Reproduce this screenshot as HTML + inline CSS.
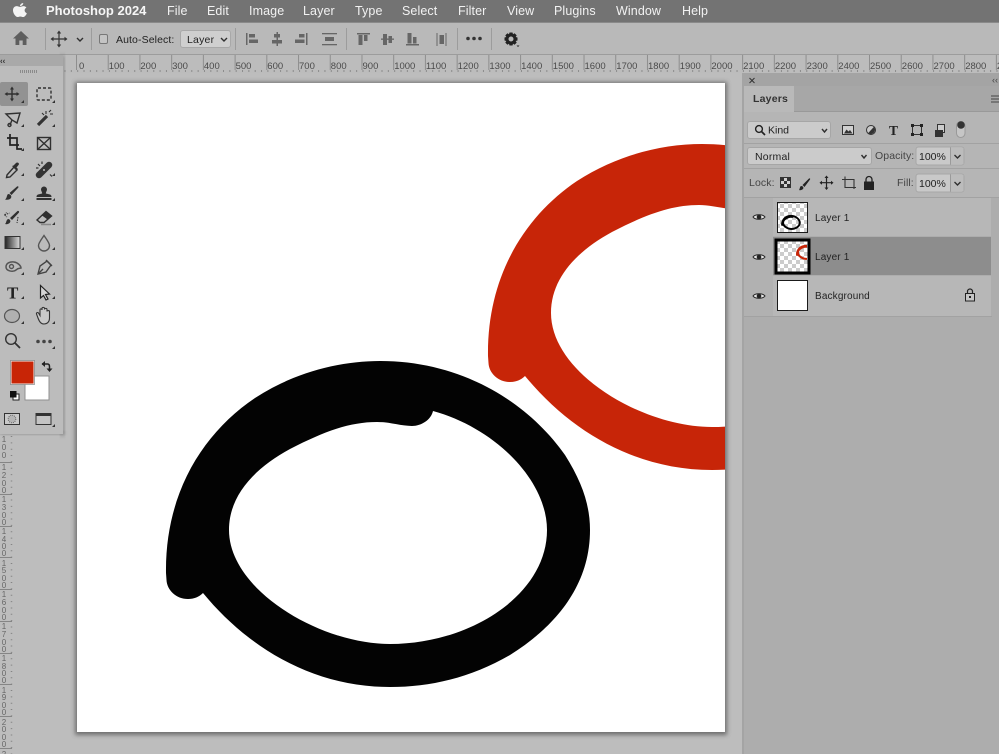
<!DOCTYPE html>
<html lang="en"><head><meta charset="utf-8"><title>Photoshop 2024</title>
<style>
html,body{margin:0;padding:0;width:999px;height:754px;overflow:hidden;background:#bdbdbd}
svg{display:block;position:absolute;left:0;top:0;filter:blur(.35px)}
text{font-family:"Liberation Sans",sans-serif}
.m{font-size:12.5px;fill:#f2f2f2;letter-spacing:.1px}
.r{font-size:9.5px;fill:#4a4a4a}
.v{font-size:8px;fill:#666;text-anchor:middle}
.p{font-size:10px;fill:#222;letter-spacing:.15px}
.s{stroke:#303030;fill:none;stroke-width:1.4}
.f{fill:#303030}
</style></head><body>
<svg width="999" height="754" viewBox="0 0 999 754" xmlns="http://www.w3.org/2000/svg">
<defs>
<path id="ring" fill-rule="evenodd" d="M166 573C165 493 203 433 255 398C295 372 340 361 380 361C465 361 530 405 565 455C582 482 590 505 590 530C590 590 550 630 510 655C470 678 430 687 390 687C315 687 250 650 203 593C199 597 194 599 188 599C176 599 167 590 166.500 580ZM229 530C229 495 255 468 290 449C325 431 350 422 377 422C390 422 401 426 412 426C421 426 431 420 433 411C495 428 547 480 547 530C547 595 470 644 390 644C320 644 229 590 229 530Z"/>
<clipPath id="cv"><rect x="77" y="83" width="648" height="649"/></clipPath>
<clipPath id="t1"><rect x="778" y="203" width="29" height="29"/></clipPath>
<clipPath id="t2"><rect x="778" y="242" width="29" height="29"/></clipPath>
<pattern id="chk" width="8" height="8" patternUnits="userSpaceOnUse"><rect width="8" height="8" fill="#fff"/><rect width="4" height="4" fill="#ccc"/><rect x="4" y="4" width="4" height="4" fill="#ccc"/></pattern>
<linearGradient id="gr" x1="0" x2="1" y1="0" y2="0"><stop offset="0" stop-color="#222"/><stop offset="1" stop-color="#ddd"/></linearGradient>
<filter id="sh" x="-5%" y="-5%" width="110%" height="110%"><feGaussianBlur stdDeviation="2"/></filter>
</defs>

<!-- workspace -->
<rect width="999" height="754" fill="#bdbdbd"/>

<!-- menu bar -->
<rect width="999" height="22" fill="#737373"/>
<rect y="22" width="999" height="1" fill="#8a8a8a"/>
<path fill="#f4f4f4" transform="translate(13 3) scale(1.4 1.16) translate(-13 -3.700)" d="M20.600 6.400C19.500 6.400 18.800 7 18 7S16.600 6.400 15.600 6.400C14 6.500 13 8 13 10C13 12.700 14.800 15.800 16.300 15.800C17 15.800 17.400 15.300 18.200 15.300S19.400 15.800 20.200 15.800C21.400 15.700 22.400 14 22.900 12.600C21.700 12 21.300 11 21.300 10C21.300 9 21.800 8.200 22.600 7.700C22 6.800 21.300 6.400 20.600 6.400ZM18 6.300C18 5 19 3.900 20.300 3.700C20.400 5.100 19.300 6.300 18 6.300Z"/>
<text x="46" y="15" font-size="13" font-weight="700" fill="#f6f6f6">Photoshop 2024</text>
<text class="m" x="167" y="15">File</text>
<text class="m" x="207" y="15">Edit</text>
<text class="m" x="249" y="15">Image</text>
<text class="m" x="303" y="15">Layer</text>
<text class="m" x="355" y="15">Type</text>
<text class="m" x="402" y="15">Select</text>
<text class="m" x="458" y="15">Filter</text>
<text class="m" x="507" y="15">View</text>
<text class="m" x="554" y="15">Plugins</text>
<text class="m" x="616" y="15">Window</text>
<text class="m" x="682" y="15">Help</text>

<!-- options bar -->
<rect y="23" width="999" height="32" fill="#b9b9b9"/>
<rect y="54" width="999" height="1" fill="#9c9c9c"/>
<path fill="#5e5e5e" d="M21 31L13 38.500H15.500V45H19.300V40.500H22.700V45H26.500V38.500H29Z"/>
<g fill="#9c9c9c"><rect x="45" y="28" width="1" height="22"/><rect x="91" y="28" width="1" height="22"/><rect x="235" y="28" width="1" height="22"/><rect x="346" y="28" width="1" height="22"/><rect x="457" y="28" width="1" height="22"/><rect x="491" y="28" width="1" height="22"/></g>
<path d="M59 32V46M52 39H66" fill="none" stroke="#333" stroke-width="1.200"/>
<path fill="#333" d="M59 30.500L56.800 33.500H61.200ZM59 47.500L56.800 44.500H61.200ZM50.500 39L53.500 36.800V41.200ZM67.500 39L64.500 36.800V41.200Z"/>
<path d="M77 38L80 41L83 38" class="s" stroke-width="1.100"/>
<rect x="99.500" y="34.500" width="8" height="9" rx="1.500" fill="#c4c4c4" stroke="#777"/>
<text x="116" y="43" font-size="10.500" fill="#222" letter-spacing=".1">Auto-Select:</text>
<rect x="180.500" y="30.500" width="50" height="17" rx="2.500" fill="#cfcfcf" stroke="#a8a8a8"/>
<text x="187" y="43" font-size="10.500" fill="#222" letter-spacing=".2">Layer</text>
<path d="M221 38L224 41L227 38" class="s" stroke-width="1.100"/>
<g fill="#666">
<rect x="246" y="33" width="1.500" height="12"/><rect x="249" y="34" width="6" height="3.500"/><rect x="249" y="39.500" width="9" height="3.500"/>
<rect x="276.500" y="32" width="1.500" height="14"/><rect x="274" y="34" width="6" height="3.500"/><rect x="272" y="40" width="10" height="3.500"/>
<rect x="306" y="33" width="1.500" height="12"/><rect x="299" y="34" width="5.500" height="3.500"/><rect x="295" y="39.500" width="9.500" height="3.500"/>
<rect x="322" y="33" width="15" height="1.300"/><rect x="325" y="37" width="9" height="4"/><rect x="322" y="44" width="15" height="1.300"/>
<rect x="357" y="33" width="13" height="1.500"/><rect x="358.500" y="35" width="4" height="10"/><rect x="364" y="35" width="3.500" height="6"/>
<rect x="381" y="38.500" width="13" height="1.300"/><rect x="383" y="34" width="4" height="11"/><rect x="388.500" y="36" width="3.500" height="7"/>
<rect x="406" y="44" width="13" height="1.500"/><rect x="407.500" y="33" width="4" height="10.500"/><rect x="413" y="37" width="3.500" height="6.500"/>
<rect x="436.500" y="33" width="1" height="13"/><rect x="445.500" y="33" width="1" height="13"/><rect x="439.500" y="35" width="4.500" height="9"/>
</g>
<g fill="#333"><circle cx="468" cy="38.500" r="1.800"/><circle cx="474" cy="38.500" r="1.800"/><circle cx="480" cy="38.500" r="1.800"/></g>
<path fill="#222" fill-rule="evenodd" d="M509.500 32.500H512.500L513 34.300L514.600 33.300L516.700 35.400L515.700 37L517.500 37.500V40.500L515.700 41L516.700 42.600L514.600 44.700L513 43.700L512.500 45.500H509.500L509 43.700L507.400 44.700L505.300 42.600L506.300 41L504.500 40.500V37.500L506.300 37L505.300 35.400L507.400 33.300L509 34.300ZM511 36.500A2.500 2.500 0 1 0 511 41.500A2.500 2.500 0 1 0 511 36.500Z"/>
<path fill="#222" d="M516.500 45.500H519.500L518 47Z"/>

<!-- horizontal ruler -->
<rect x="64" y="55" width="935" height="18" fill="#bcbcbc"/>
<line x1="76" y1="62.500" x2="999" y2="62.500" stroke="#8e8e8e" stroke-width="15" stroke-dasharray="1 30.720"/>
<line x1="64.500" y1="71" x2="999" y2="71" stroke="#7c7c7c" stroke-width="1.500" stroke-dasharray="1 5.340"/>
<g class="r">
<text x="79" y="69">0</text><text x="108.700" y="69">100</text><text x="140.400" y="69">200</text><text x="172.100" y="69">300</text><text x="203.900" y="69">400</text><text x="235.600" y="69">500</text><text x="267.300" y="69">600</text><text x="299" y="69">700</text><text x="330.800" y="69">800</text><text x="362.500" y="69">900</text><text x="394.200" y="69">1000</text><text x="425.900" y="69">1100</text><text x="457.600" y="69">1200</text><text x="489.400" y="69">1300</text><text x="521.100" y="69">1400</text><text x="552.800" y="69">1500</text><text x="584.500" y="69">1600</text><text x="616.300" y="69">1700</text><text x="648" y="69">1800</text><text x="679.700" y="69">1900</text><text x="711.400" y="69">2000</text><text x="743.100" y="69">2100</text><text x="774.900" y="69">2200</text><text x="806.600" y="69">2300</text><text x="838.300" y="69">2400</text><text x="870" y="69">2500</text><text x="901.800" y="69">2600</text><text x="933.500" y="69">2700</text><text x="965.200" y="69">2800</text><text x="996.900" y="69">2900</text>
</g>

<!-- vertical ruler -->
<g fill="#858585"><rect y="462" width="12" height="1"/><rect y="494" width="12" height="1"/><rect y="526" width="12" height="1"/><rect y="557" width="12" height="1"/><rect y="589" width="12" height="1"/><rect y="621" width="12" height="1"/><rect y="653" width="12" height="1"/><rect y="684" width="12" height="1"/><rect y="716" width="12" height="1"/><rect y="748" width="12" height="1"/></g>
<line x1="11.500" y1="436" x2="11.500" y2="754" stroke="#858585" stroke-width="1.500" stroke-dasharray="1 5.350"/>
<g class="v">
<text x="4"><tspan x="4" y="442">1</tspan><tspan x="4" y="450">0</tspan><tspan x="4" y="458">0</tspan></text>
<text><tspan x="4" y="470">1</tspan><tspan x="4" y="478">2</tspan><tspan x="4" y="486">0</tspan><tspan x="4" y="493">0</tspan></text>
<text><tspan x="4" y="502">1</tspan><tspan x="4" y="510">3</tspan><tspan x="4" y="518">0</tspan><tspan x="4" y="525">0</tspan></text>
<text><tspan x="4" y="534">1</tspan><tspan x="4" y="542">4</tspan><tspan x="4" y="549">0</tspan><tspan x="4" y="556">0</tspan></text>
<text><tspan x="4" y="566">1</tspan><tspan x="4" y="573">5</tspan><tspan x="4" y="581">0</tspan><tspan x="4" y="588">0</tspan></text>
<text><tspan x="4" y="597">1</tspan><tspan x="4" y="605">6</tspan><tspan x="4" y="613">0</tspan><tspan x="4" y="620">0</tspan></text>
<text><tspan x="4" y="629">1</tspan><tspan x="4" y="637">7</tspan><tspan x="4" y="645">0</tspan><tspan x="4" y="652">0</tspan></text>
<text><tspan x="4" y="661">1</tspan><tspan x="4" y="669">8</tspan><tspan x="4" y="676">0</tspan><tspan x="4" y="683">0</tspan></text>
<text><tspan x="4" y="693">1</tspan><tspan x="4" y="700">9</tspan><tspan x="4" y="708">0</tspan><tspan x="4" y="715">0</tspan></text>
<text><tspan x="4" y="725">2</tspan><tspan x="4" y="732">0</tspan><tspan x="4" y="740">0</tspan><tspan x="4" y="747">0</tspan></text>
<text><tspan x="4" y="757">2</tspan></text>
</g>

<!-- canvas -->
<rect x="75" y="82" width="652" height="653" fill="#555" opacity=".75" filter="url(#sh)"/>
<rect x="77" y="83" width="648" height="649" fill="#fff"/>
<g clip-path="url(#cv)">
<use href="#ring" transform="translate(322 -217)" fill="#c72508"/>
<use href="#ring" fill="#030303"/>
</g>

<!-- tool panel -->
<rect x="60" y="55" width="5" height="381" fill="#777" opacity=".55" filter="url(#sh)"/>
<rect y="431" width="64" height="4" fill="#777" opacity=".55" filter="url(#sh)"/>
<rect width="63" height="379" y="55" fill="#bcbcbc"/>
<rect width="63" height="11" y="55" fill="#a9a9a9"/>
<text x="0" y="63.500" font-size="8" fill="#333" font-weight="700">‹‹</text>
<line x1="20" y1="71.500" x2="38" y2="71.500" stroke="#8a8a8a" stroke-width="3" stroke-dasharray="1 1"/>
<rect y="82" width="28" height="24" rx="2" fill="#929292"/>

<g class="s">
<!-- move -->
<path d="M12 88V100M6 94H18"/><path class="f" stroke="none" d="M12 86.500L10 89.500H14ZM12 101.500L10 98.500H14ZM4.500 94L7.500 92V96ZM19.500 94L16.500 92V96Z"/>
<!-- marquee -->
<rect x="37" y="88" width="14" height="12" rx="1" stroke-dasharray="3 2"/>
<!-- lasso -->
<path d="M6 114L20 113L17 123L12 120L6 114ZM12 120L10 125"/><circle cx="9.500" cy="125" r="1.500"/>
<!-- wand -->
<path d="M38 125L47 116" stroke-width="3.200" stroke="#333"/><path d="M46 111V114M50 114H53M51 110L49 112M42 113L44 115" stroke-width="1.100"/>
<!-- crop -->
<path d="M7 138H17V149H22M10 134V145H19" stroke-width="1.700" stroke="#222"/>
<!-- slice frame -->
<rect x="37.500" y="137.500" width="13" height="12"/><path d="M37.500 137.500L50.500 149.500M50.500 137.500L37.500 149.500"/>
<!-- eyedropper -->
<path d="M7 175L14 167L17 170L10 177L6.500 177.500Z"/><path class="f" stroke="none" d="M13.500 165.500L16 163C17.500 161.500 20 163.500 18.500 165L16.500 167.500L18 169L16.500 170.500L12 166Z"/>
<!-- healing -->
<path d="M39 175L49 165" stroke-width="6.500" stroke="#333" stroke-linecap="round"/><path d="M38 164L40 166M42 161.500V164M36 168H38.500M50 174.500L52 176.500" stroke-width="1.200"/><circle cx="44" cy="170" r="1" fill="#bcbcbc" stroke="none"/>
<!-- brush -->
<path class="f" stroke="none" d="M8 194C10.500 194 12 196 11 198C9.500 200 7 200 5 199.500C7 198.500 6.500 195.500 8 194ZM9.500 193L17 186.500C18 185.700 19 186.800 18.200 187.800L11.500 195Z"/>
<!-- stamp -->
<path class="f" stroke="none" d="M44 186.500A3 3 0 0 1 47 189.500C47 191 45.800 192 45.800 193.500L50 194.500C51 195 51.500 195.500 51.500 197H36.500C36.500 195.500 37 195 38 194.500L42.200 193.500C42.200 192 41 191 41 189.500A3 3 0 0 1 44 186.500ZM36.500 198H51.500V200H36.500Z"/>
<!-- history brush -->
<path class="f" stroke="none" d="M8 219C10 219 11 221 10 222.500C9 224 6.500 224.500 5 224C6.500 223 6 220 8 219ZM10 218L17.500 211C18.500 210.500 19.500 211.500 19 212.500L12 220Z"/>
<path d="M4.500 215L9.500 213M4.500 215L6.500 212.500M4.500 215L7 217M18 217L17 223" stroke-width="1" stroke-dasharray="1.500 1"/>
<!-- eraser -->
<path d="M37 220L46 211.500L51.500 216L44 222.500H40Z"/><path class="f" stroke="none" d="M42 215.500L46 211.500L51.500 216L47.500 219.500Z"/><path d="M41 224.500H51" stroke="#888" stroke-width="1.500"/>
</g>
<!-- gradient -->
<rect x="5" y="236.500" width="15" height="12" fill="url(#gr)" stroke="#333"/>
<g class="s">
<!-- smudge/drop -->
<path d="M44 235.500C41 240 38.500 243 38.500 245.500A5.500 5.500 0 0 0 49.500 245.500C49.500 243 47 240 44 235.500Z" stroke="#555"/>
<!-- lasso-object -->
<path d="M6 267C6 263 10 261.500 14 262C18 262.500 21 266 21 268C19 268.500 18 268 16 270C13 272.500 6 271 6 267Z" stroke="#555" stroke-width="1.500"/><circle cx="11.500" cy="266.500" r="2" stroke="#555"/>
<!-- pen -->
<path d="M38 274L40 266L47 261L51 265L46 272Z" stroke="#444" stroke-width="1.400"/><path d="M38 274L43 269M46 260L52 266" stroke="#444"/>
</g>
<!-- Type -->
<text x="7" y="298.500" font-size="17" font-weight="700" fill="#222" style="font-family:'Liberation Serif',serif">T</text>
<!-- arrow -->
<path d="M40.500 285.500V298L43.500 295.500L46 300L48 299L45.500 294.500L49.500 294Z" fill="#d5d5d5" stroke="#222" stroke-width="1.200"/>
<!-- ellipse -->
<ellipse cx="12" cy="316" rx="7.500" ry="6.500" fill="#b0b0b0" stroke="#555" stroke-width="1.200"/>
<!-- hand -->
<path d="M38 318L36.500 314C36 312.500 38 312 38.800 313.500L40 315.500V310C40 308.500 42 308.500 42 310V308.500C42 307 44.500 307 44.500 308.500V309.500C44.500 308 47 308 47 309.500V311.500C47 310.200 49.500 310.200 49.500 311.500V318C49.500 322 47 324 44 324C41 324 39.500 322 38 318Z" fill="#c9c9c9" stroke="#333" stroke-width="1.100"/>
<!-- zoom -->
<circle cx="11" cy="339" r="5.300" fill="none" stroke="#333" stroke-width="1.400"/><path d="M15 343L20 348" stroke="#333" stroke-width="1.800"/>
<!-- more -->
<g fill="#444"><circle cx="38" cy="341.500" r="1.800"/><circle cx="44" cy="341.500" r="1.800"/><circle cx="50" cy="341.500" r="1.800"/></g>
<!-- tool corner marks -->
<g fill="#333"><path d="M24 100V103H21ZM55 100V103H52ZM24 124V127H21ZM55 124V127H52ZM24 148V151H21ZM24 173V176H21ZM55 173V176H52ZM24 198V201H21ZM55 198V201H52ZM24 222V225H21ZM55 222V225H52ZM24 247V250H21ZM55 247V250H52ZM24 272V275H21ZM55 272V275H52ZM24 296V299H21ZM55 296V299H52ZM24 321V324H21ZM55 321V324H52ZM55 346V349H52ZM55 424V427H52Z"/></g>
<!-- colours -->
<rect x="25" y="376" width="24" height="24" fill="#fff" stroke="#909090"/>
<rect x="11" y="361" width="23" height="23" fill="#c82506" stroke="#eee"/>
<rect x="10.500" y="360.500" width="24" height="24" fill="none" stroke="#777" stroke-width=".6"/>
<path d="M42 364H47.500C49 364 49.500 365 49.500 366.500V370" fill="none" stroke="#222" stroke-width="1.500"/><path fill="#222" d="M45 361V367L41.500 364ZM46.500 368.500H52.500L49.500 372Z"/>
<rect x="13" y="394" width="6" height="6" fill="#fff" stroke="#222"/><rect x="10" y="391" width="6.500" height="6.500" fill="#111"/>
<!-- mask / screen -->
<rect x="4.500" y="413.500" width="15" height="11" fill="#c9c9c9" stroke="#333"/><circle cx="12" cy="419" r="3.800" fill="#b5b5b5" stroke="#666" stroke-dasharray="1 1"/>
<rect x="36" y="413.500" width="15" height="11" fill="#c4c4c4" stroke="#333"/><rect x="36" y="413" width="15" height="3" fill="#333"/>

<!-- layers panel -->
<rect x="742" y="73" width="2" height="681" fill="#9a9a9a" opacity=".7"/>
<rect x="744" y="73" width="255" height="681" fill="#adadad"/>
<rect x="744" y="73" width="255" height="13" fill="#a4a4a4"/>
<path d="M749.500 78L754.500 83M754.500 78L749.500 83" stroke="#333" stroke-width="1"/>
<text x="992" y="83" font-size="9" fill="#444">‹‹</text>
<rect x="744" y="86" width="255" height="26" fill="#a7a7a7"/>
<rect x="744" y="111" width="255" height="1" fill="#999"/>
<rect x="744" y="86" width="50" height="27" fill="#b9b9b9"/>
<text x="753" y="102" font-size="10.500" font-weight="700" fill="#333" letter-spacing=".2">Layers</text>
<path d="M991 96H999M991 99H999M991 102H999" stroke="#444" stroke-width="1"/>
<rect x="744" y="112" width="255" height="85" fill="#b5b5b5"/>

<rect x="747.500" y="121.500" width="83" height="17" rx="2.500" fill="#cbcbcb" stroke="#a6a6a6"/>
<circle cx="759" cy="129" r="3.400" fill="none" stroke="#222" stroke-width="1.400"/><path d="M761.500 131.500L765 135" stroke="#222" stroke-width="1.700"/>
<text x="768" y="133.500" font-size="10.500" fill="#222">Kind</text>
<path d="M822 129L824.500 132L827 129" class="s" stroke-width="1.100"/>
<rect x="842.500" y="125.500" width="11" height="9" fill="#d0d0d0" stroke="#333"/><path fill="#333" d="M844 133.500L846.500 129.500L848.500 131.500L850 130L852.500 133.500Z"/>
<circle cx="871" cy="130" r="4.500" fill="#c9c9c9" stroke="#333"/><path fill="#333" d="M874 126.700A4.500 4.500 0 0 1 868 133.300Z"/>
<text x="889" y="135" font-size="13.500" font-weight="700" fill="#222" style="font-family:'Liberation Serif',serif">T</text>
<rect x="912.500" y="125.500" width="9" height="9" fill="none" stroke="#333"/><g fill="#222"><rect x="911" y="124" width="3" height="3"/><rect x="920" y="124" width="3" height="3"/><rect x="911" y="133" width="3" height="3"/><rect x="920" y="133" width="3" height="3"/></g>
<rect x="937.500" y="124.500" width="7" height="8" fill="#ccc" stroke="#333"/><rect x="935.500" y="130.500" width="7" height="6" fill="#333" stroke="#333"/>
<rect x="956.500" y="121.500" width="8.500" height="16" rx="4.200" fill="#c6c6c6" stroke="#999"/><circle cx="961" cy="125" r="3.800" fill="#333"/>

<rect x="744" y="143" width="255" height="1" fill="#a2a2a2"/>
<rect x="747.500" y="147.500" width="124" height="17" rx="2.500" fill="#cbcbcb" stroke="#a6a6a6"/>
<text x="755" y="160" font-size="10.500" fill="#222" letter-spacing=".2">Normal</text>
<path d="M861.500 155L864 158L866.500 155" class="s" stroke-width="1.100"/>
<text x="875" y="159" font-size="10.500" fill="#444" letter-spacing=".1">Opacity:</text>
<rect x="916" y="147" width="48" height="18" rx="2.500" fill="#c9c9c9" stroke="#a6a6a6"/><rect x="950" y="147.500" width="1" height="17" fill="#9a9a9a"/><rect x="951" y="148" width="12.500" height="16" fill="#bcbcbc"/>
<text x="919" y="160" font-size="10.500" fill="#222">100%</text>
<path d="M954.500 155L957.500 158L960.500 155" class="s" stroke-width="1.100"/>

<rect x="744" y="168" width="255" height="1" fill="#a2a2a2"/>
<text x="749" y="186" font-size="10.500" fill="#444" letter-spacing=".1">Lock:</text>
<rect x="780.500" y="177.500" width="10" height="10" fill="#d0d0d0" stroke="#333"/><g fill="#333"><rect x="781" y="178" width="3" height="3"/><rect x="787" y="178" width="3" height="3"/><rect x="784" y="181" width="3" height="3"/><rect x="781" y="184" width="3" height="3"/><rect x="787" y="184" width="3" height="3"/></g>
<path fill="#222" d="M801 186C803 186 804 187.500 803 189C802 190 800 190.500 799 190C800 189 799.500 187 801 186ZM802.500 185L809 178.500C810 178 810.500 178.800 810 179.500L804.500 187Z"/>
<path d="M826.500 177V188.500M821 182.700H832" stroke="#222" stroke-width="1.200"/><path fill="#222" d="M826.500 175.500L824.500 178H828.500ZM826.500 190L824.500 187.500H828.500ZM819.500 182.700L822 180.700V184.700ZM833.500 182.700L831 180.700V184.700Z"/>
<path d="M842 179.500H854V189M845 176.500V187.500H856" fill="none" stroke="#333" stroke-width="1.100"/>
<path fill="#222" d="M864 181.500H874V190H864Z"/><path d="M866 181.500V179.500A3 3 0 0 1 872 179.500V181.500" fill="none" stroke="#222" stroke-width="1.300"/>
<text x="897" y="186" font-size="10.500" fill="#444" letter-spacing=".1">Fill:</text>
<rect x="916" y="174" width="48" height="18" rx="2.500" fill="#c9c9c9" stroke="#a6a6a6"/><rect x="950" y="174.500" width="1" height="17" fill="#9a9a9a"/><rect x="951" y="175" width="12.500" height="16" fill="#bcbcbc"/>
<text x="919" y="187" font-size="10.500" fill="#222">100%</text>
<path d="M954.500 182L957.500 185L960.500 182" class="s" stroke-width="1.100"/>

<!-- layer rows -->
<rect x="744" y="197" width="255" height="1" fill="#a2a2a2"/>
<rect x="773" y="198" width="218" height="38" fill="#b7b7b7"/>
<rect x="744" y="198" width="29" height="118" fill="#b1b1b1"/>
<rect x="773" y="237" width="218" height="38" fill="#8d8d8d"/>
<rect x="773" y="276" width="218" height="40" fill="#b7b7b7"/>
<rect x="744" y="316" width="248" height="1" fill="#a2a2a2"/>

<g>
<path d="M753 217C755 214 763 214 765 217C763 220 755 220 753 217Z" fill="#e5e5e5" stroke="#222"/><circle cx="759" cy="217" r="2.300" fill="#222"/>
<path d="M753 257C755 254 763 254 765 257C763 260 755 260 753 257Z" fill="#e5e5e5" stroke="#222"/><circle cx="759" cy="257" r="2.300" fill="#222"/>
<path d="M753 296C755 293 763 293 765 296C763 299 755 299 753 296Z" fill="#e5e5e5" stroke="#222"/><circle cx="759" cy="296" r="2.300" fill="#222"/>
</g>

<rect x="777.500" y="202.500" width="30" height="30" fill="url(#chk)" stroke="#1a1a1a"/>
<g clip-path="url(#t1)"><use href="#ring" transform="translate(777 202) scale(.0463) translate(-77 -83)" fill="#000"/></g>
<rect x="776" y="240" width="33" height="33" fill="url(#chk)" stroke="#000" stroke-width="3"/>
<g clip-path="url(#t2)"><use href="#ring" transform="translate(777 242) scale(.0463) translate(245 -300)" fill="#c72508"/></g>
<rect x="777.500" y="280.500" width="30" height="30" fill="#fff" stroke="#1a1a1a"/>

<text class="p" x="815" y="221">Layer 1</text>
<text class="p" x="815" y="260">Layer 1</text>
<text class="p" x="815" y="299">Background</text>
<path fill="none" stroke="#222" stroke-width="1.200" d="M967.500 293V291.500A2.500 2.500 0 0 1 972.500 291.500V293"/><rect x="965.500" y="293.500" width="9" height="7.500" fill="#c5c5c5" stroke="#222"/><rect x="969" y="296" width="2" height="2" fill="#222"/>
</svg>
</body></html>
